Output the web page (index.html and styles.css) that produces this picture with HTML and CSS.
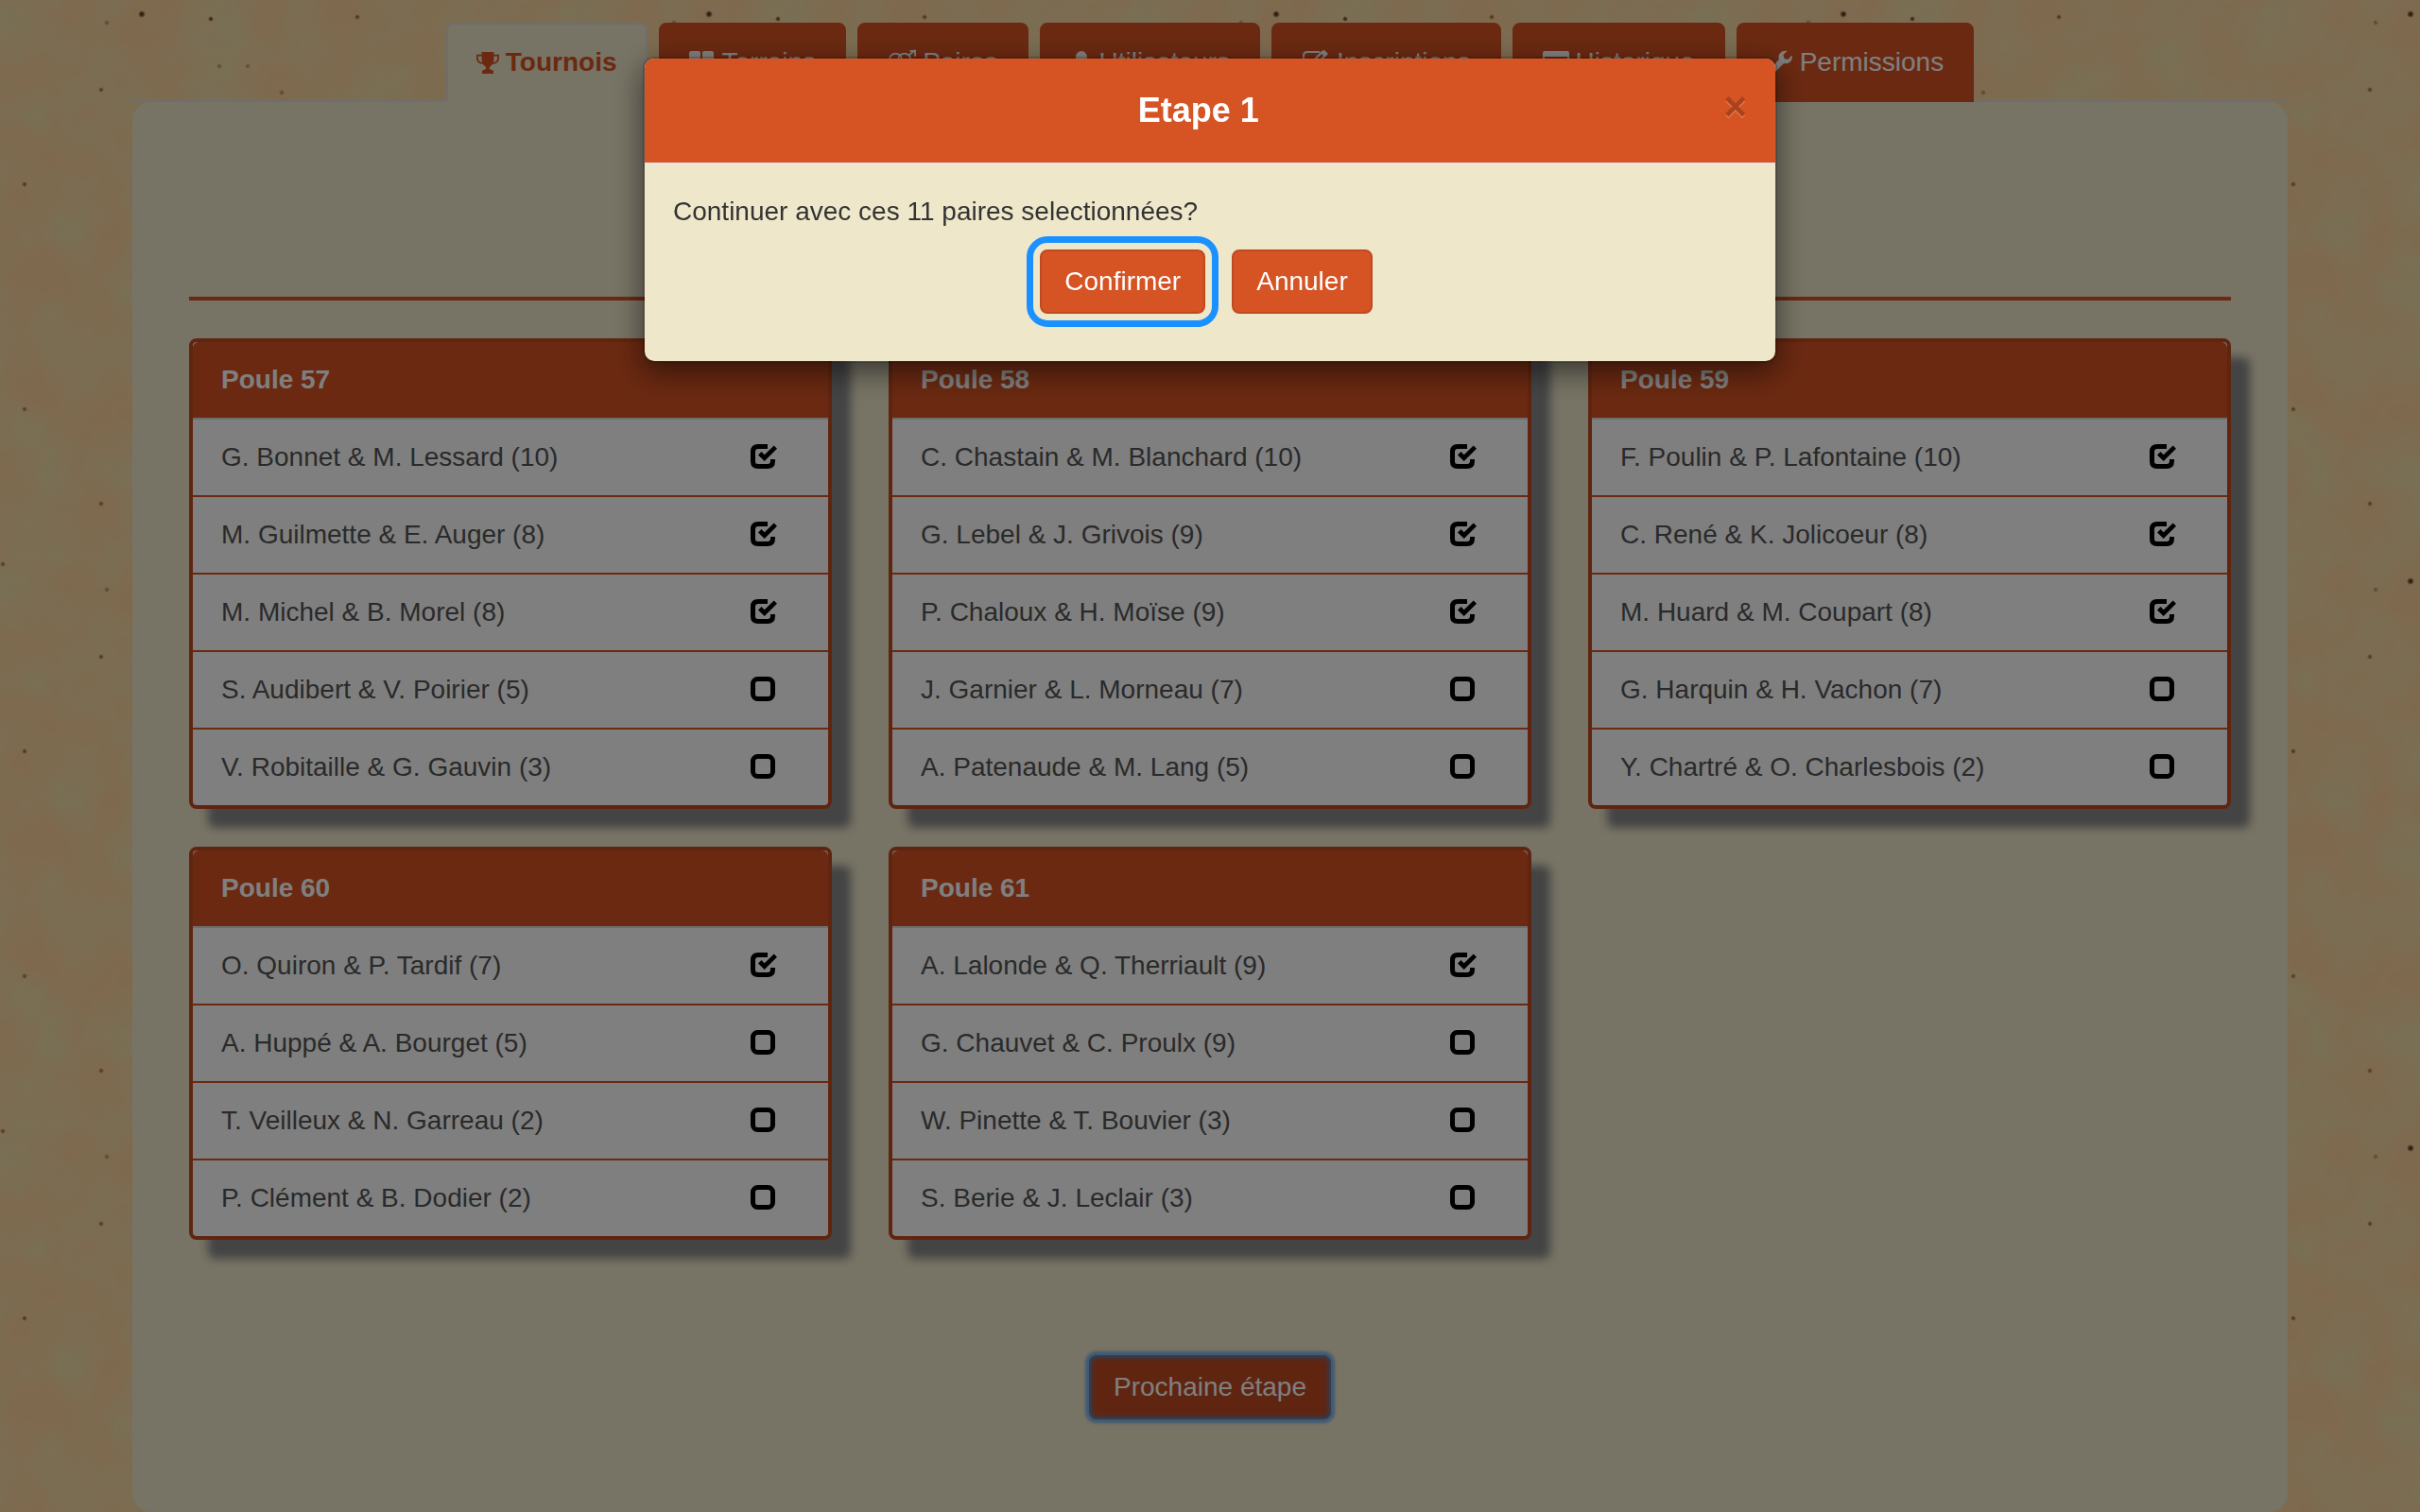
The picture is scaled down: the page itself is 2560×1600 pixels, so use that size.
FILE: index.html
```html
<!DOCTYPE html>
<html lang="fr">
<head>
<meta charset="utf-8">
<meta name="viewport" content="width=device-width, initial-scale=1">
<title>Tournois - Etape 1</title>
<link rel="stylesheet" href="styles.css">
</head>
<body>
<svg class="sprite" aria-hidden="true">
  <symbol id="box-on" viewBox="0 0 28 28">
    <path d="M18 2.500H8Q2.500 2.500 2.500 8V18.500Q2.500 23.500 8 23.500H18Q23.500 23.500 23.500 18V16" fill="none" stroke="#000" stroke-width="5"/>
    <path d="M8 11.500L11.500 8L14.700 11.300L24.700 1.500L28 4.700L14.700 18Z" fill="#000" stroke="#fff" stroke-width="2" paint-order="stroke"/>
  </symbol>
  <symbol id="box-off" viewBox="0 0 28 28">
    <rect x="2.500" y="2.500" width="21" height="21" rx="5" fill="none" stroke="#000" stroke-width="5"/>
  </symbol>
</svg>

<div class="container">
  <nav>
    <ul class="tabs">
      <li><a class="tab active" href="#tournois">
        <svg class="icon slim" viewBox="0 0 26 28"><path fill-rule="evenodd" d="M6 2H20V5H26V9C26 13 23 15.500 18.500 16C17 18.500 15 19 15 20V21C15 22.500 19.500 22.500 19.500 24V27H6.500V24C6.500 22.500 11 22.500 11 21V20C11 19 9 18.500 7.500 16C3 15.500 0 13 0 9V5H6ZM2 7V9C2 11.500 3.500 13.500 6.700 14C6 12 6 9.500 6 7ZM24 7H20C20 9.500 20 12 19.300 14C22.500 13.500 24 11.500 24 9Z"/></svg>
        Tournois</a></li>
      <li><a class="tab" href="#terrains">
        <svg class="icon" viewBox="0 0 28 28"><path d="M2 2H10Q12 2 12 4V11Q12 13 10 13H2Q0 13 0 11V4Q0 2 2 2ZM16 2H24Q26 2 26 4V11Q26 13 24 13H16Q14 13 14 11V4Q14 2 16 2ZM2 15H10Q12 15 12 17V24Q12 26 10 26H2Q0 26 0 24V17Q0 15 2 15ZM16 15H24Q26 15 26 17V24Q26 26 24 26H16Q14 26 14 24V17Q14 15 16 15Z"/></svg>
        Terrains</a></li>
      <li><a class="tab" href="#paires">
        <svg class="icon wide" viewBox="0 0 32 28"><g fill="none" stroke="currentColor" stroke-width="2"><circle cx="9" cy="11" r="7"/><circle cx="19" cy="11" r="7"/><path d="M24 6L31 0M25 1H31V7M9 18V27M5 23H13"/></g></svg>
        Paires</a></li>
      <li><a class="tab" href="#utilisateurs">
        <svg class="icon slim" viewBox="0 0 24 28"><path d="M12 2C15.500 2 18 5 18 9C18 12 16.500 14.500 15 16C15 19 23 19 23 24V26H1V24C1 19 9 19 9 16C7.500 14.500 6 12 6 9C6 5 8.500 2 12 2Z"/></svg>
        Utilisateurs</a></li>
      <li><a class="tab" href="#inscriptions">
        <svg class="icon wide" viewBox="0 0 30 28"><path d="M19 3H6Q2 3 2 7V20Q2 24 6 24H19Q23 24 23 20V16" fill="none" stroke="currentColor" stroke-width="2"/><path d="M10 18V13L21 2L24 1L28 5L15 18ZM12 15V16H14L23 7L21 5Z" fill-rule="evenodd"/></svg>
        Inscriptions</a></li>
      <li><a class="tab" href="#historique">
        <svg class="icon" viewBox="0 0 28 28"><path d="M2 2H26Q28 2 28 4V24Q28 26 26 26H2Q0 26 0 24V4Q0 2 2 2ZM2 8V24H26V8ZM4 11H7V13H4ZM9 11H24V13H9ZM4 15H7V17H4ZM9 15H24V17H9ZM4 19H7V21H4ZM9 19H24V21H9Z" fill-rule="evenodd"/></svg>
        Historique</a></li>
      <li><a class="tab" href="#permissions">
        <svg class="icon" viewBox="0 0 28 28"><path d="M26.500 6.500C28 12 23.500 16.500 18 15L6.500 26.500C4 28.500 0 25 2 22L13 11C11 6 15.500 0.500 21.500 2L17.500 6L18.500 10L22.500 11Z"/></svg>
        Permissions</a></li>
    </ul>
  </nav>

  <main class="page">
    <hr class="rule">
    <div class="pools">
      <section class="pool">
        <h2>Poule 57</h2>
        <ul>
          <li><label>G. Bonnet &amp; M. Lessard (10)<span class="check"><input type="checkbox" checked><svg><use href="#box-on"/></svg></span></label></li>
          <li><label>M. Guilmette &amp; E. Auger (8)<span class="check"><input type="checkbox" checked><svg><use href="#box-on"/></svg></span></label></li>
          <li><label>M. Michel &amp; B. Morel (8)<span class="check"><input type="checkbox" checked><svg><use href="#box-on"/></svg></span></label></li>
          <li><label>S. Audibert &amp; V. Poirier (5)<span class="check"><input type="checkbox"><svg><use href="#box-off"/></svg></span></label></li>
          <li><label>V. Robitaille &amp; G. Gauvin (3)<span class="check"><input type="checkbox"><svg><use href="#box-off"/></svg></span></label></li>
        </ul>
      </section>
      <section class="pool">
        <h2>Poule 58</h2>
        <ul>
          <li><label>C. Chastain &amp; M. Blanchard (10)<span class="check"><input type="checkbox" checked><svg><use href="#box-on"/></svg></span></label></li>
          <li><label>G. Lebel &amp; J. Grivois (9)<span class="check"><input type="checkbox" checked><svg><use href="#box-on"/></svg></span></label></li>
          <li><label>P. Chaloux &amp; H. Moïse (9)<span class="check"><input type="checkbox" checked><svg><use href="#box-on"/></svg></span></label></li>
          <li><label>J. Garnier &amp; L. Morneau (7)<span class="check"><input type="checkbox"><svg><use href="#box-off"/></svg></span></label></li>
          <li><label>A. Patenaude &amp; M. Lang (5)<span class="check"><input type="checkbox"><svg><use href="#box-off"/></svg></span></label></li>
        </ul>
      </section>
      <section class="pool">
        <h2>Poule 59</h2>
        <ul>
          <li><label>F. Poulin &amp; P. Lafontaine (10)<span class="check"><input type="checkbox" checked><svg><use href="#box-on"/></svg></span></label></li>
          <li><label>C. René &amp; K. Jolicoeur (8)<span class="check"><input type="checkbox" checked><svg><use href="#box-on"/></svg></span></label></li>
          <li><label>M. Huard &amp; M. Coupart (8)<span class="check"><input type="checkbox" checked><svg><use href="#box-on"/></svg></span></label></li>
          <li><label>G. Harquin &amp; H. Vachon (7)<span class="check"><input type="checkbox"><svg><use href="#box-off"/></svg></span></label></li>
          <li><label>Y. Chartré &amp; O. Charlesbois (2)<span class="check"><input type="checkbox"><svg><use href="#box-off"/></svg></span></label></li>
        </ul>
      </section>
      <section class="pool">
        <h2>Poule 60</h2>
        <ul>
          <li><label>O. Quiron &amp; P. Tardif (7)<span class="check"><input type="checkbox" checked><svg><use href="#box-on"/></svg></span></label></li>
          <li><label>A. Huppé &amp; A. Bourget (5)<span class="check"><input type="checkbox"><svg><use href="#box-off"/></svg></span></label></li>
          <li><label>T. Veilleux &amp; N. Garreau (2)<span class="check"><input type="checkbox"><svg><use href="#box-off"/></svg></span></label></li>
          <li><label>P. Clément &amp; B. Dodier (2)<span class="check"><input type="checkbox"><svg><use href="#box-off"/></svg></span></label></li>
        </ul>
      </section>
      <section class="pool">
        <h2>Poule 61</h2>
        <ul>
          <li><label>A. Lalonde &amp; Q. Therriault (9)<span class="check"><input type="checkbox" checked><svg><use href="#box-on"/></svg></span></label></li>
          <li><label>G. Chauvet &amp; C. Proulx (9)<span class="check"><input type="checkbox"><svg><use href="#box-off"/></svg></span></label></li>
          <li><label>W. Pinette &amp; T. Bouvier (3)<span class="check"><input type="checkbox"><svg><use href="#box-off"/></svg></span></label></li>
          <li><label>S. Berie &amp; J. Leclair (3)<span class="check"><input type="checkbox"><svg><use href="#box-off"/></svg></span></label></li>
        </ul>
      </section>
    </div>
    <div class="next">
      <button class="btn pressed" type="button">Prochaine étape</button>
    </div>
  </main>
</div>

<div class="backdrop">
  <div class="modal" role="dialog" aria-modal="true" aria-labelledby="modal-title">
    <header class="modal-head">
      <h1 id="modal-title">Etape 1</h1>
      <button class="close" type="button" aria-label="Fermer">×</button>
    </header>
    <div class="modal-body">
      <p>Continuer avec ces 11 paires selectionnées?</p>
      <div class="actions">
        <button class="btn ringed" type="button">Confirmer</button>
        <button class="btn" type="button">Annuler</button>
      </div>
    </div>
  </div>
</div>
</body>
</html>
```
FILE: styles.css
```css
* { box-sizing: border-box; }

:root {
  --orange: #d65323;
  --orange-dark: #c04a20;
  --cream: #eee7ca;
  --line: #dddddd;
}

body {
  margin: 0;
  font-family: "Liberation Sans", Arial, sans-serif;
  font-size: 28px;
  line-height: 40px;
  color: #333;
  /* paper: dark specks over a fine mottled grain, one 600px tile */
  background-color: #ffd29c;
  background-image:
    radial-gradient(circle at 150px 15px, #54341c 1px, transparent 4px),
    radial-gradient(circle at 223px 20px, #80552f 1px, transparent 3px),
    radial-gradient(circle at 378px 18px, #a8743f 1px, transparent 3px),
    radial-gradient(circle at 113px 24px, #c09566 1px, transparent 3px),
    radial-gradient(circle at 107px 95px, #a87c4a 1px, transparent 3px),
    radial-gradient(circle at 26px 195px, #a07848 1px, transparent 3px),
    radial-gradient(circle at 232px 70px, #c49a68 1px, transparent 3px),
    radial-gradient(circle at 262px 70px, #c89c6c 1px, transparent 3px),
    radial-gradient(circle at 298px 98px, #c49064 1px, transparent 3px),
    radial-gradient(circle at 26px 433px, #a88050 1px, transparent 3px),
    radial-gradient(circle at 107px 533px, #a88050 1px, transparent 3px),
    radial-gradient(circle at 3px 597px, #a88050 1px, transparent 3px),
    url("data:image/svg+xml,%3Csvg xmlns='http://www.w3.org/2000/svg' width='600' height='600'%3E%3Cfilter id='a' x='0' y='0' width='100%25' height='100%25' color-interpolation-filters='sRGB'%3E%3CfeTurbulence type='fractalNoise' baseFrequency='.015' numOctaves='5' seed='4' stitchTiles='stitch'/%3E%3CfeColorMatrix values='0 0 0 0 .95 0 0 0 0 .87 0 0 0 0 .66 2 0 0 0 -.5'/%3E%3C/filter%3E%3Crect width='600' height='600' filter='url(%23a)'/%3E%3C/svg%3E");
  background-size: 600px 600px;
}

h1, h2, p, ul { margin: 0; padding: 0; }
ul { list-style: none; }
button, input { font: inherit; }

.sprite { position: absolute; width: 0; height: 0; }

.container {
  max-width: 2280px;
  margin: 0 auto;
  padding-top: 24px;
}

/* Tabs */
.tabs {
  display: flex;
  justify-content: center;
  gap: 12px;
  border-bottom: 2px solid var(--line);
}

.tabs li { margin-bottom: -2px; }

.tab {
  display: flex;
  align-items: center;
  gap: 7px;
  padding: 20px 30px;
  border: 2px solid var(--orange);
  border-radius: 8px 8px 0 0;
  background: var(--orange);
  color: #fff;
  text-decoration: none;
}

.tab.active {
  background: var(--cream);
  border-color: var(--line);
  border-bottom-color: var(--cream);
  color: var(--orange);
  font-weight: bold;
}

.icon { width: 28px; height: 28px; fill: currentColor; }
.icon.slim { width: 24px; }
.icon.wide { width: 30px; }

/* Page panel */
.page {
  padding: 206px 60px 98px;
  background: var(--cream);
  border-radius: 20px;
}

.rule {
  height: 4px;
  margin: 0 0 40px;
  border: 0;
  background: var(--orange);
}

.pools {
  display: grid;
  grid-template-columns: repeat(3, 1fr);
  gap: 40px 60px;
  align-items: start;
}

.pool {
  border: 4px solid var(--orange-dark);
  border-radius: 8px;
  background: #fff;
  box-shadow: 20px 20px 10px #888;
}

.pool h2 {
  padding: 20px 30px;
  border-bottom: 2px solid var(--line);
  border-radius: 6px 6px 0 0;
  background: var(--orange);
  color: #fff;
  font-size: 28px;
  line-height: 40px;
}

.pool li + li { border-top: 2px solid var(--orange); }

.pool label {
  display: flex;
  justify-content: space-between;
  align-items: center;
  padding: 20px 54px 20px 30px;
  color: #555;
}

.check { display: grid; }
.check > * { grid-area: 1 / 1; width: 28px; height: 28px; margin: 0; }
.check input { opacity: 0; }

.next {
  display: flex;
  justify-content: center;
  margin-top: 122px;
}

/* Buttons */
.btn {
  padding: 12px 24px;
  border: 2px solid var(--orange-dark);
  border-radius: 8px;
  background: var(--orange);
  color: #fff;
  line-height: 40px;
}

.btn.pressed {
  background: var(--orange-dark);
  border-color: #6878a0;
  box-shadow: 0 0 3px 4px #80b4e8, inset 0 0 5px 1px #6878a0;
}

.btn.ringed {
  outline: 7px solid #1a91ff;
  outline-offset: 7px;
}

/* Modal */
.backdrop {
  position: fixed;
  inset: 0;
  padding: 60px 20px;
  background: rgba(0, 0, 0, .5);
}

.modal {
  max-width: 1200px;
  margin: 0 auto;
  border: 2px solid rgba(0, 0, 0, .2);
  border-radius: 12px;
  background: var(--cream);
  background-clip: padding-box;
  box-shadow: 0 10px 30px rgba(0, 0, 0, .5);
}

.modal-head {
  display: flex;
  align-items: flex-start;
  padding: 30px;
  border-bottom: 2px solid #e5e5e5;
  border-radius: 10px 10px 0 0;
  background: var(--orange);
}

.modal-head h1 {
  flex: 1;
  color: #fff;
  font-size: 36px;
  line-height: 50px;
  text-align: center;
}

.close {
  padding: 0;
  border: 0;
  background: none;
  color: #000;
  font-size: 42px;
  font-weight: bold;
  line-height: 42px;
  text-shadow: 0 2px 0 #fff;
  opacity: .2;
}

.modal-body { padding: 30px 30px 50px; }

.actions {
  display: flex;
  justify-content: center;
  gap: 28px;
  margin-top: 20px;
  padding-right: 8px;
}
```
